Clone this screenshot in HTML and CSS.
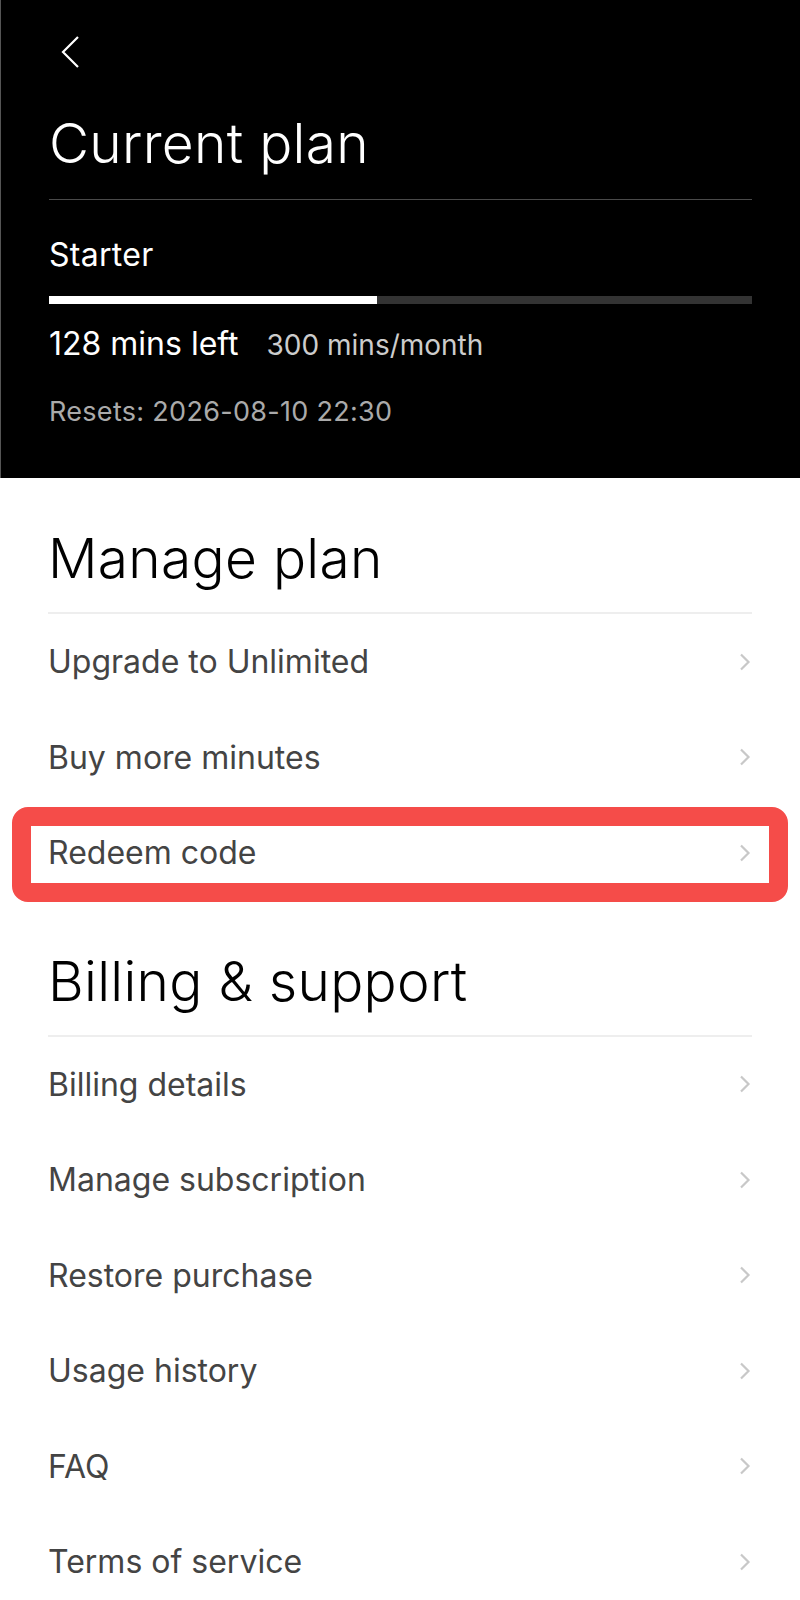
FILE: index.html
```html
<!DOCTYPE html>
<html lang="en">
<head>
    <meta charset="UTF-8">
    <meta name="viewport" content="width=device-width, initial-scale=1.0">
    <title>Current plan</title>
    <link rel="stylesheet" href="styles.css">
</head>
<body>
    <div class="header">
        <button class="back-btn" aria-label="Back">
            <svg width="20" height="34" viewBox="0 0 20 34">
                <path d="M19 2 L4 17 L19 32" fill="none" stroke="#fff" stroke-width="2.2" />
            </svg>
        </button>
        <h1 class="title">Current plan</h1>
        <div class="plan-name">Starter</div>
        <div class="bar">
            <div class="bar-fill" style="width: 46.6%"></div>
        </div>
        <div class="usage">
            <span class="left">128 mins left</span>
            <span class="quota">300 mins/month</span>
        </div>
        <div class="resets">Resets: 2026-08-10 22:30</div>
    </div>

    <div class="section">
        <h2 class="section-title">Manage plan</h2>
        <div class="rows">
            <div class="row">
                <span>Upgrade to Unlimited</span>
                <svg class="chev" width="12" height="18" viewBox="0 0 12 18"><path d="M2 1.5 L9.5 9 L2 16.5" /></svg>
            </div>
            <div class="row">
                <span>Buy more minutes</span>
                <svg class="chev" width="12" height="18" viewBox="0 0 12 18"><path d="M2 1.5 L9.5 9 L2 16.5" /></svg>
            </div>
            <div class="row highlighted">
                <span>Redeem code</span>
                <svg class="chev" width="12" height="18" viewBox="0 0 12 18"><path d="M2 1.5 L9.5 9 L2 16.5" /></svg>
                <div class="highlight"></div>
            </div>
        </div>
    </div>

    <div class="section">
        <h2 class="section-title">Billing &amp; support</h2>
        <div class="rows">
            <div class="row">
                <span>Billing details</span>
                <svg class="chev" width="12" height="18" viewBox="0 0 12 18"><path d="M2 1.5 L9.5 9 L2 16.5" /></svg>
            </div>
            <div class="row">
                <span>Manage subscription</span>
                <svg class="chev" width="12" height="18" viewBox="0 0 12 18"><path d="M2 1.5 L9.5 9 L2 16.5" /></svg>
            </div>
            <div class="row">
                <span>Restore purchase</span>
                <svg class="chev" width="12" height="18" viewBox="0 0 12 18"><path d="M2 1.5 L9.5 9 L2 16.5" /></svg>
            </div>
            <div class="row">
                <span>Usage history</span>
                <svg class="chev" width="12" height="18" viewBox="0 0 12 18"><path d="M2 1.5 L9.5 9 L2 16.5" /></svg>
            </div>
            <div class="row">
                <span>FAQ</span>
                <svg class="chev" width="12" height="18" viewBox="0 0 12 18"><path d="M2 1.5 L9.5 9 L2 16.5" /></svg>
            </div>
            <div class="row">
                <span>Terms of service</span>
                <svg class="chev" width="12" height="18" viewBox="0 0 12 18"><path d="M2 1.5 L9.5 9 L2 16.5" /></svg>
            </div>
        </div>
    </div>
</body>
</html>
```

FILE: styles.css
```css
body {
    margin: 0;
    background-color: #fff;
    font-family: Inter, "Noto Sans", sans-serif;
}

.header {
    background-color: #000;
    color: #fff;
    height: 478px;
    box-sizing: border-box;
    padding: 35px 48px 0;
    border-left: 1px solid #555;
    display: flex;
    flex-direction: column;
}

.back-btn {
    background: none;
    border: none;
    padding: 0;
    margin-left: 10px;
    width: 20px;
    height: 34px;
    cursor: pointer;
}

.back-btn svg {
    display: block;
}

.title {
    font-size: 55px;
    font-weight: 300;
    line-height: 66px;
    margin: 41px 0 0;
    padding-bottom: 23px;
    border-bottom: 1px solid #4a4a4a;
    letter-spacing: 0.3px;
}

.plan-name {
    font-size: 32px;
    line-height: 38px;
    margin-top: 36px;
    letter-spacing: 0.3px;
}

.bar {
    height: 8px;
    background-color: #333;
    margin-top: 22px;
}

.bar-fill {
    height: 100%;
    background-color: #fff;
}

.usage {
    display: flex;
    align-items: baseline;
    gap: 28px;
    margin-top: 22px;
    line-height: 36px;
}

.left {
    font-size: 32px;
}

.quota {
    font-size: 28px;
    color: #ccc;
}

.resets {
    font-size: 27px;
    line-height: 34px;
    color: #aaa;
    margin-top: 32px;
    letter-spacing: 0.3px;
}

.section {
    padding: 47px 48px 0;
}

.section-title {
    font-size: 55px;
    font-weight: 300;
    line-height: 66px;
    margin: 0;
    padding-bottom: 21px;
    border-bottom: 2px solid #eee;
    color: #000;
    letter-spacing: 0.3px;
}

.row {
    height: 95.5px;
    display: flex;
    align-items: center;
    justify-content: space-between;
    font-size: 32px;
    color: #444;
}

.chev {
    margin-right: 1px;
    fill: none;
    stroke: #c8c8c8;
    stroke-width: 2.2;
}

.highlighted {
    position: relative;
}

.highlight {
    position: absolute;
    top: 2px;
    bottom: -1px;
    left: -36px;
    right: -36px;
    border: 19px solid #f54c49;
    border-radius: 16px;
    pointer-events: none;
}
```
